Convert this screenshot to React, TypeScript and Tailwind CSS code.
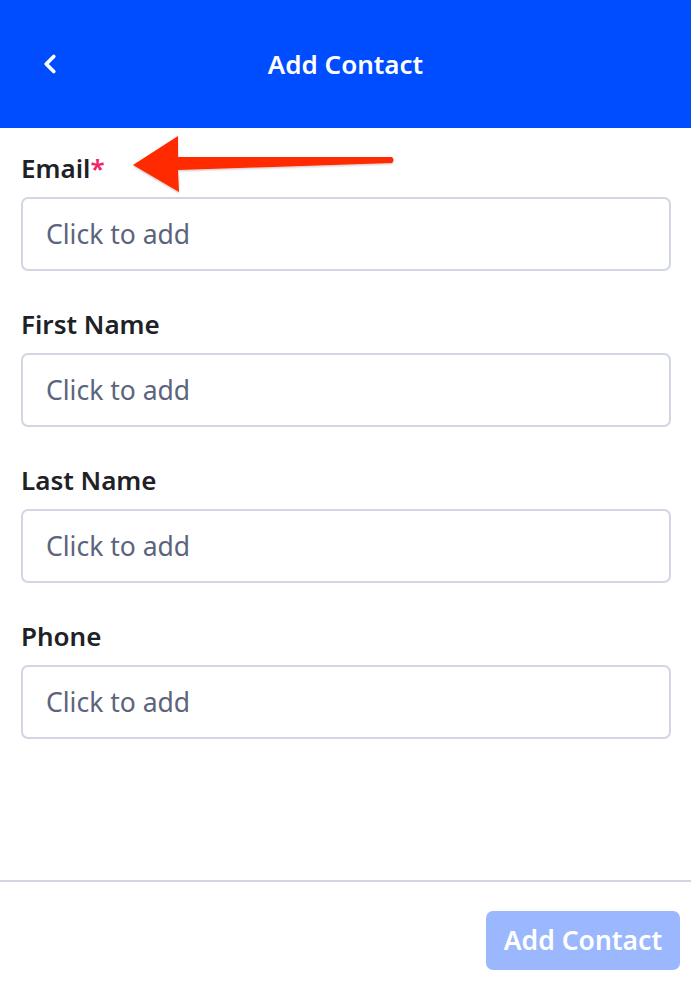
import { ChevronLeft } from 'lucide-react';

const fields = [
  { label: 'Email', required: true },
  { label: 'First Name' },
  { label: 'Last Name' },
  { label: 'Phone' },
];

function Arrow() {
  return (
    <svg
      className="pointer-events-none absolute left-0 top-0"
      width="691"
      height="220"
      viewBox="0 0 691 220"
    >
      <defs>
        <filter id="arrowShadow" x="-10%" y="-30%" width="120%" height="160%">
          <feDropShadow dx="0" dy="1" stdDeviation="1.2" floodColor="#000" floodOpacity="0.25" />
        </filter>
      </defs>
      <path
        d="M133 165 L178 136 L178 157 L392 157 Q395 160 392 163 L178 170 L179 192 Z"
        fill="#ff2a00"
        filter="url(#arrowShadow)"
      />
    </svg>
  );
}

export default function App() {
  return (
    <div
      className="relative flex h-[994px] w-full flex-col bg-white"
      style={{ fontFamily: '"Noto Sans", "Open Sans", sans-serif' }}
    >
      {/* Header */}
      <div className="relative flex h-[128px] shrink-0 items-center justify-center bg-[#004dff]">
        <button className="absolute left-[35px] top-[49px] text-white">
          <ChevronLeft className="h-[30px] w-[30px]" strokeWidth={3} />
        </button>
        <h1 className="text-[26px] font-semibold text-white">Add Contact</h1>
      </div>

      {/* Body */}
      <div className="flex flex-1 flex-col gap-[38px] pl-[21px] pr-[20px] pt-[25px]">
        {fields.map((f) => (
          <div key={f.label} className="flex flex-col gap-[14px]">
            <label className="text-[26px] font-semibold leading-[30px] text-[#1e2126]">
              {f.label}
              {f.required && <span className="text-[#f0246b]">*</span>}
            </label>
            <input
              placeholder="Click to add"
              className="h-[74px] w-full rounded-[7px] border-2 border-[#d2d6e2] px-[23px] text-[26.5px] text-[#1e2126] outline-none placeholder:text-[#5b647c]"
            />
          </div>
        ))}
      </div>

      {/* Footer */}
      <div className="flex h-[114px] shrink-0 items-start justify-end border-t-2 border-[#d2d6e2] pr-[11px] pt-[29px]">
        <button
          disabled
          className="h-[59px] w-[194px] rounded-[7px] bg-[#9bb8ff] text-[26.5px] font-semibold text-white"
        >
          Add Contact
        </button>
      </div>

      <Arrow />
    </div>
  );
}
